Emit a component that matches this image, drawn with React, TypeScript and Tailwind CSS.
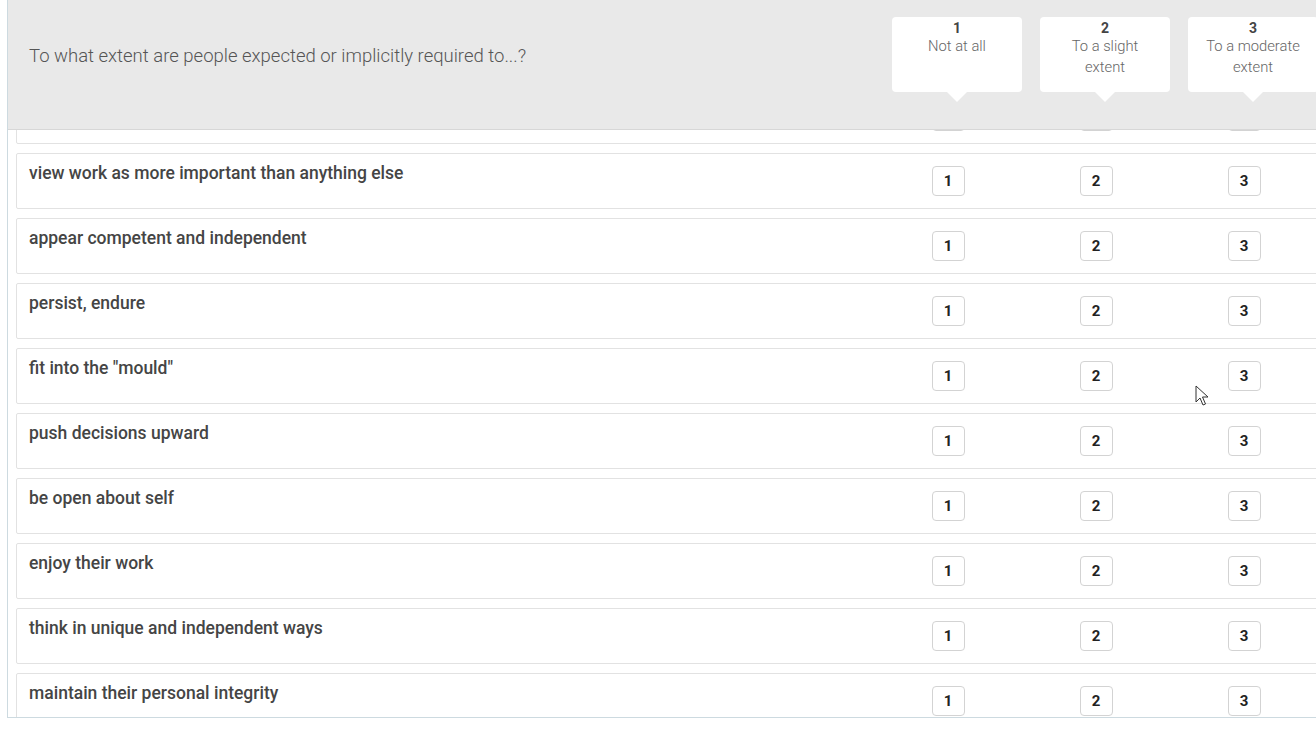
import React from 'react';

const scale = [
  { n: 1, label: 'Not at all' },
  { n: 2, label: 'To a slight extent' },
  { n: 3, label: 'To a moderate extent' },
  { n: 4, label: 'To a great extent' },
  { n: 5, label: 'To a very great extent' },
];

const items = [
  'take on more than they can handle',
  'view work as more important than anything else',
  'appear competent and independent',
  'persist, endure',
  'fit into the "mould"',
  'push decisions upward',
  'be open about self',
  'enjoy their work',
  'think in unique and independent ways',
  'maintain their personal integrity',
];

const ScaleHeader = ({ n, label }: { n: number; label: string }) => (
  <div className="w-[148px] shrink-0 flex flex-col items-center pt-[17px]">
    <div className="w-[130px] h-[75px] bg-white rounded-[4px] flex flex-col items-center pt-[3px] px-3 text-center">
      <span className="text-[14px] leading-[16px] font-bold text-[#444]">{n}</span>
      <span className="text-[14.75px] leading-[21px] font-light text-[#666]">{label}</span>
    </div>
    <div className="w-0 h-0 border-l-[10px] border-r-[10px] border-t-[10px] border-l-transparent border-r-transparent border-t-white" />
  </div>
);

const ItemRow = ({ text }: { text: string }) => (
  <div className="h-[56px] ml-2 mr-2 mb-[9px] border border-[#e2e2e2] rounded-[2px] bg-white flex">
    <div className="w-[857px] shrink-0 pl-[12px] pt-[7px] text-[17.5px] leading-[24px] font-medium text-[#454545]">
      {text}
    </div>
    {scale.map((s) => (
      <div key={s.n} className="w-[148px] shrink-0 flex items-center justify-center">
        <button className="w-[33px] h-[30px] border border-[#d3d3d3] rounded-[4px] bg-white text-[15px] font-bold text-[#222] flex items-center justify-center">
          {s.n}
        </button>
      </div>
    ))}
  </div>
);

export default function App() {
  return (
    <div className="relative w-[1316px] h-[741px] overflow-hidden bg-white" style={{ fontFamily: 'Roboto, "Open Sans", sans-serif' }}>
      <div className="ml-[7px] w-[1620px] h-[718px] border-l border-b border-[#cddae0] flex flex-col">
        {/* sticky header */}
        <div className="h-[130px] shrink-0 bg-[#e9e9e9] border-b border-[#d7d7d7] flex">
          <div className="w-[875px] shrink-0 pl-[21px] pt-[44px] text-[18.5px] leading-[24px] font-light text-[#555]">
            To what extent are people expected or implicitly required to...?
          </div>
          {scale.map((s) => (
            <ScaleHeader key={s.n} n={s.n} label={s.label} />
          ))}
        </div>
        {/* scrolled rows */}
        <div className="flex-1 overflow-hidden">
          <div className="-mt-[42px]">
            {items.map((t) => (
              <ItemRow key={t} text={t} />
            ))}
          </div>
        </div>
      </div>
      {/* mouse pointer */}
      <svg className="absolute left-[1195px] top-[385px]" width="14" height="22" viewBox="0 0 14 22">
        <path d="M1 1 L1 17 L5 13 L8 20 L10.5 19 L7.5 12 L13 12 Z" fill="white" stroke="#333" strokeWidth="1" strokeLinejoin="round" />
      </svg>
    </div>
  );
}
